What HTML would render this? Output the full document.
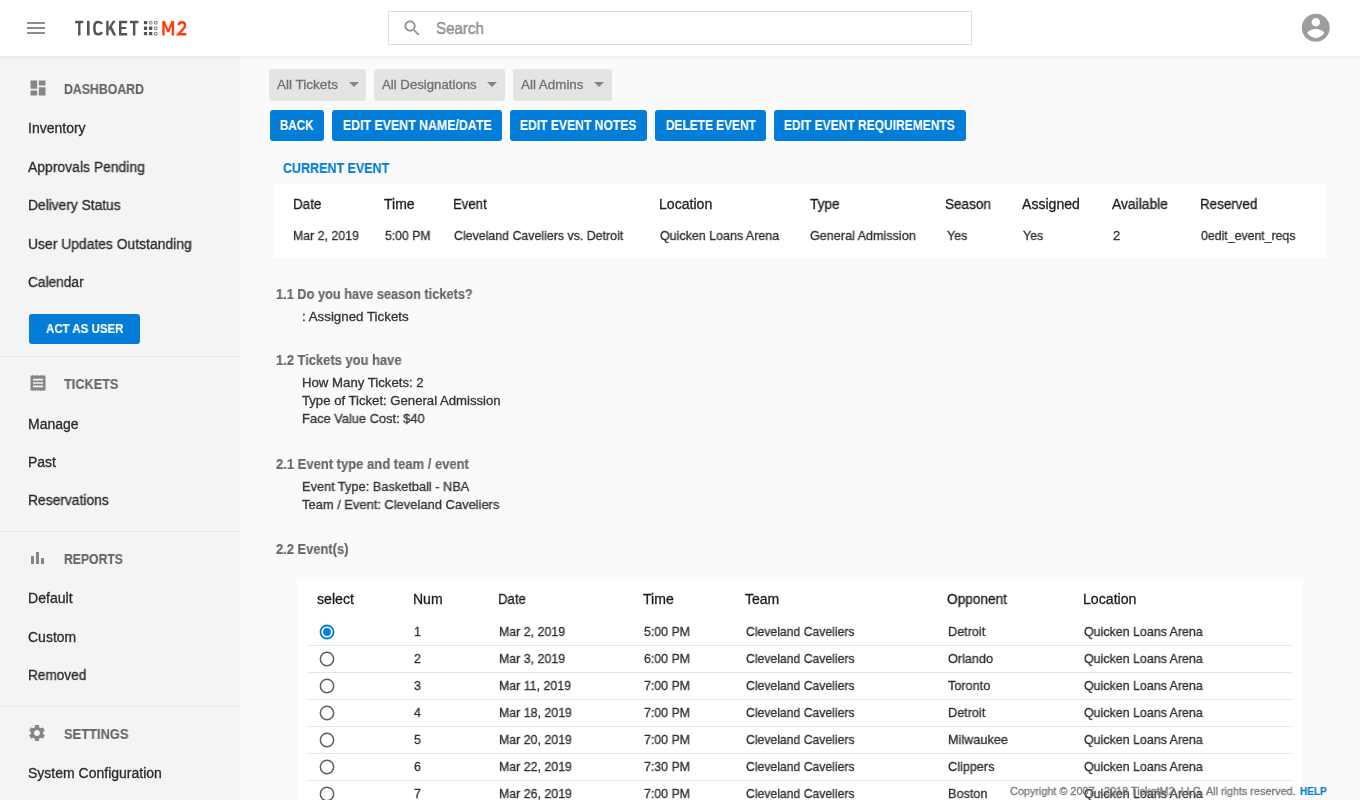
<!DOCTYPE html>
<html><head><meta charset="utf-8"><title>TicketM2</title>
<style>
html,body{margin:0;padding:0;width:1360px;height:800px;overflow:hidden;background:#fafafa;}
body{font-family:"Liberation Sans",sans-serif;position:relative;}
.t{position:absolute;will-change:transform;white-space:nowrap;line-height:1;transform-origin:0 0;}
.r{position:absolute;box-sizing:content-box;}
</style></head><body>
<div class="r" style="left:0px;top:0px;width:1360px;height:800px;background:#fafafa;"></div>
<div class="r" style="left:0px;top:56px;width:240px;height:744px;background:#f4f4f4;"></div>
<div class="r" style="left:0px;top:0px;width:1360px;height:56px;background:#ffffff;box-shadow:0 1px 5px rgba(0,0,0,0.08);z-index:2;"></div>
<div class="r" style="left:27px;top:22px;width:18px;height:2px;background:#8d8b8c;z-index:3"></div>
<div class="r" style="left:27px;top:27px;width:18px;height:2px;background:#8d8b8c;z-index:3"></div>
<div class="r" style="left:27px;top:32px;width:18px;height:2px;background:#8d8b8c;z-index:3"></div>
<svg class="r" style="left:0;top:0;z-index:3" width="200" height="56" viewBox="0 0 200 56">
<g fill="#55544f">
<path d="M75.2 20.8H83.3V23.2H80.5V35.4H78.1V23.2H75.2Z"/>
<path d="M87 20.8H89.6V35.4H87Z"/>
<path d="M106.2 20.8H108.6V35.4H106.2Z"/>
<path d="M108.6 27.4L112.9 20.8H115.8L108.6 31.2Z"/>
<path d="M109.9 28.7L111.7 26.2L116.2 35.4H113.3Z"/>
<path d="M119 20.8H127.2V23.2H121.5V26.9H126.2V29H121.5V33H127.2V35.4H119Z"/>
<path d="M130 20.8H138.4V23.2H135.4V35.4H132.9V23.2H130Z"/>
</g>
<path fill="none" stroke="#55544f" stroke-width="2.5" d="M102.1 24C101.3 22.5 100.2 21.95 98.3 21.95C95.9 21.95 94.45 23.4 94.45 26.2V29.9C94.45 32.7 95.9 34.15 98.3 34.15C100.2 34.15 101.3 33.6 102.1 32.1"/>
<g fill="#55544f">
<rect x="143.9" y="21" width="3.3" height="3.3" rx="0.3"/>
<rect x="143.9" y="26.6" width="3.3" height="3.3" rx="0.3"/>
<rect x="143.9" y="32" width="3.3" height="3.3" rx="0.3"/>
<rect x="149" y="26.6" width="3.3" height="3.3" rx="0.3"/>
<rect x="149" y="32" width="3.3" height="3.3" rx="0.3"/>
</g>
<g fill="none" stroke="#6f6d68" stroke-width="0.9">
<rect x="149.4" y="21.4" width="2.6" height="2.6" rx="0.25"/>
<rect x="154.5" y="21.4" width="2.6" height="2.6" rx="0.25"/>
<rect x="154.5" y="27" width="2.6" height="2.6" rx="0.25"/>
<rect x="154.5" y="32.4" width="2.6" height="2.6" rx="0.25"/>
</g>
<path fill="#ff3b0a" d="M162.3 35.5V20.9H164.9L168.2 29.2L171.5 20.9H174.1V35.5H171.7V25.8L169.3 32.2H167.1L164.7 25.8V35.5Z"/>
<path fill="none" stroke="#ff3b0a" stroke-width="2.4" d="M178.6 25.2C178.8 23.2 180.1 22.2 182 22.2C184 22.2 185 23.6 185 25.2C185 26.7 184.3 27.8 183 29.2L178.3 34.3H186.3"/>
</svg>
<div class="r" style="left:388px;top:11px;width:582px;height:32px;border:1px solid #dedede;background:#fff;z-index:3"></div>
<svg class="r" style="left:402.4px;top:17.6px;z-index:4" width="20.4" height="20.4" viewBox="0 0 24 24"><path fill="#8f8f8f" d="M15.5 14h-.79l-.28-.27C15.41 12.59 16 11.11 16 9.5 16 5.91 13.09 3 9.5 3S3 5.91 3 9.5 5.91 16 9.5 16c1.61 0 3.09-.59 4.23-1.570l.27.28v.79l5 4.99L20.49 19l-4.99-5zm-6 0C7.01 14 5 11.990 5 9.5S7.01 5 9.5 5 14 7.01 14 9.5 11.99 14 9.5 14z"/></svg>
<div class="t" style="left:436.25px;top:21.00px;font-size:16px;color:#8f8f8f;-webkit-text-stroke:0.3px currentColor;transform:scaleX(0.9450);z-index:4;-webkit-text-stroke:0.45px currentColor;">Search</div>
<svg class="r" style="left:1298.8px;top:11.2px;z-index:4" width="33.6" height="33.6" viewBox="0 0 24 24"><path fill="#9e9d9e" d="M12 2C6.48 2 2 6.48 2 12s4.48 10 10 10 10-4.48 10-10S17.52 2 12 2zm0 3c1.66 0 3 1.34 3 3s-1.34 3-3 3-3-1.34-3-3 1.34-3 3-3zm0 14.2c-2.5 0-4.71-1.28-6-3.22.03-1.99 4-3.08 6-3.08 1.99 0 5.970 1.09 6 3.08-1.29 1.94-3.5 3.22-6 3.220z"/></svg>
<div class="t" style="left:64.15px;top:81.90px;font-size:14px;color:#666666;font-weight:bold;-webkit-text-stroke:0.15px currentColor;transform:scaleX(0.8780);">DASHBOARD</div>
<div class="t" style="left:63.75px;top:376.80px;font-size:14px;color:#666666;font-weight:bold;-webkit-text-stroke:0.15px currentColor;transform:scaleX(0.9083);">TICKETS</div>
<div class="t" style="left:64.15px;top:551.90px;font-size:14px;color:#666666;font-weight:bold;-webkit-text-stroke:0.15px currentColor;transform:scaleX(0.8703);">REPORTS</div>
<div class="t" style="left:63.75px;top:726.80px;font-size:14px;color:#666666;font-weight:bold;-webkit-text-stroke:0.15px currentColor;transform:scaleX(0.9212);">SETTINGS</div>
<div class="t" style="left:28.25px;top:121.00px;font-size:14px;color:#2a2a2a;-webkit-text-stroke:0.3px currentColor;transform:scaleX(0.9916);">Inventory</div>
<div class="t" style="left:28.25px;top:159.60px;font-size:14px;color:#2a2a2a;-webkit-text-stroke:0.3px currentColor;transform:scaleX(0.9946);">Approvals Pending</div>
<div class="t" style="left:28.25px;top:198.00px;font-size:14px;color:#2a2a2a;-webkit-text-stroke:0.3px currentColor;transform:scaleX(0.9835);">Delivery Status</div>
<div class="t" style="left:28.25px;top:237.00px;font-size:14px;color:#2a2a2a;-webkit-text-stroke:0.3px currentColor;transform:scaleX(0.9917);">User Updates Outstanding</div>
<div class="t" style="left:28.25px;top:275.00px;font-size:14px;color:#2a2a2a;-webkit-text-stroke:0.3px currentColor;transform:scaleX(0.9787);">Calendar</div>
<div class="t" style="left:28.25px;top:416.80px;font-size:14px;color:#2a2a2a;-webkit-text-stroke:0.3px currentColor;">Manage</div>
<div class="t" style="left:28.25px;top:455.00px;font-size:14px;color:#2a2a2a;-webkit-text-stroke:0.3px currentColor;">Past</div>
<div class="t" style="left:28.25px;top:493.30px;font-size:14px;color:#2a2a2a;-webkit-text-stroke:0.3px currentColor;transform:scaleX(0.9877);">Reservations</div>
<div class="t" style="left:28.25px;top:591.00px;font-size:14px;color:#2a2a2a;-webkit-text-stroke:0.3px currentColor;transform:scaleX(1.0056);">Default</div>
<div class="t" style="left:28.25px;top:629.80px;font-size:14px;color:#2a2a2a;-webkit-text-stroke:0.3px currentColor;transform:scaleX(0.9973);">Custom</div>
<div class="t" style="left:28.25px;top:668.00px;font-size:14px;color:#2a2a2a;-webkit-text-stroke:0.3px currentColor;transform:scaleX(0.9730);">Removed</div>
<div class="t" style="left:28.25px;top:766.00px;font-size:14px;color:#2a2a2a;-webkit-text-stroke:0.3px currentColor;">System Configuration</div>
<svg class="r" style="left:27.5px;top:77.9px" width="20" height="20" viewBox="0 0 24 24"><path fill="#868686" d="M3 13h8V3H3v10zm0 8h8v-6H3v6zm10 0h8V11h-8v10zm0-18v6h8V3h-8z"/></svg>
<svg class="r" style="left:27.5px;top:373.3px" width="20" height="20" viewBox="0 0 24 24"><path fill="#868686" d="M18 17H6v-2h12v2zm0-4H6v-2h12v2zm0-4H6V7h12v2zM3 22l1.5-1.5L6 22l1.5-1.5L9 22l1.5-1.5L12 22l1.5-1.5L15 22l1.5-1.5L18 22l1.5-1.5L21 22V2l-1.5 1.5L18 2l-1.5 1.5L15 2l-1.5 1.5L12 2l-1.5 1.5L9 2 7.5 3.5 6 2 4.5 3.5 3 2v20z"/></svg>
<div class="r" style="left:31.4px;top:555.6px;width:2.8000000000000043px;height:8.600000000000023px;background:#868686;"></div>
<div class="r" style="left:36px;top:551.8px;width:2.799999999999997px;height:12.400000000000091px;background:#868686;"></div>
<div class="r" style="left:41px;top:558.2px;width:2.6000000000000014px;height:6.0px;background:#868686;"></div>
<svg class="r" style="left:27px;top:723px" width="20" height="20" viewBox="0 0 24 24"><path fill="#868686" d="M19.14 12.94c.04-.3.06-.61.06-.94 0-.32-.02-.64-.07-.94l2.03-1.58c.18-.14.23-.41.12-.61l-1.92-3.32c-.12-.22-.37-.29-.59-.22l-2.39.96c-.5-.38-1.03-.7-1.62-.94l-.36-2.54c-.04-.24-.24-.41-.48-.41h-3.84c-.24 0-.43.17-.47.41l-.36 2.54c-.59.24-1.13.57-1.62.94l-2.39-.96c-.22-.08-.47 0-.59.22L2.74 8.87c-.12.21-.08.47.12.61l2.030 1.58c-.05.3-.09.63-.09.94s.02.64.07.94l-2.03 1.58c-.18.14-.23.41-.12.61l1.92 3.32c.12.22.37.29.59.22l2.39-.96c.5.38 1.03.7 1.62.94l.36 2.54c.05.24.24.41.48.41h3.84c.24 0 .44-.17.47-.41l.36-2.54c.59-.24 1.13-.56 1.62-.94l2.39.96c.22.08.47 0 .59-.22l1.92-3.32c.12-.22.07-.47-.12-.61l-2.01-1.58zM12 15.6c-1.98 0-3.6-1.62-3.6-3.6s1.62-3.6 3.6-3.6 3.6 1.62 3.6 3.6-1.62 3.6-3.6 3.6z"/></svg>
<div class="r" style="left:29px;top:314px;width:111px;height:30px;background:#027ed8;border-radius:3px;"></div>
<div class="t" style="left:45.65px;top:322.00px;font-size:13px;color:#ffffff;font-weight:bold;-webkit-text-stroke:0.15px currentColor;transform:scaleX(0.8832);">ACT AS USER</div>
<div class="r" style="left:0px;top:356px;width:240px;height:1px;background:#e9e9e9;"></div>
<div class="r" style="left:0px;top:531px;width:240px;height:1px;background:#e9e9e9;"></div>
<div class="r" style="left:0px;top:706px;width:240px;height:1px;background:#e9e9e9;"></div>
<div class="r" style="left:269px;top:69px;width:97px;height:32px;background:#e4e4e4;border-radius:3px;"></div>
<div class="t" style="left:276.75px;top:77.70px;font-size:13px;color:#707070;-webkit-text-stroke:0.3px currentColor;transform:scaleX(1.0408);">All Tickets</div>
<div class="r" style="left:348.59999999999997px;top:82px;width:0;height:0;border-left:5px solid transparent;border-right:5px solid transparent;border-top:5px solid #858585"></div>
<div class="r" style="left:374px;top:69px;width:131px;height:32px;background:#e4e4e4;border-radius:3px;"></div>
<div class="t" style="left:381.65px;top:77.70px;font-size:13px;color:#707070;-webkit-text-stroke:0.3px currentColor;transform:scaleX(1.0160);">All Designations</div>
<div class="r" style="left:487.3px;top:82px;width:0;height:0;border-left:5px solid transparent;border-right:5px solid transparent;border-top:5px solid #858585"></div>
<div class="r" style="left:513px;top:69px;width:99px;height:32px;background:#e4e4e4;border-radius:3px;"></div>
<div class="t" style="left:520.75px;top:77.70px;font-size:13px;color:#707070;-webkit-text-stroke:0.3px currentColor;transform:scaleX(1.0297);">All Admins</div>
<div class="r" style="left:594.3000000000001px;top:82px;width:0;height:0;border-left:5px solid transparent;border-right:5px solid transparent;border-top:5px solid #858585"></div>
<div class="r" style="left:270px;top:110px;width:54px;height:31px;background:#027ed8;border-radius:3px;"></div>
<div class="t" style="left:280.45px;top:118.00px;font-size:14px;color:#ffffff;font-weight:bold;-webkit-text-stroke:0.15px currentColor;transform:scaleX(0.8307);">BACK</div>
<div class="r" style="left:332px;top:110px;width:170px;height:31px;background:#027ed8;border-radius:3px;"></div>
<div class="t" style="left:342.65px;top:118.00px;font-size:14px;color:#ffffff;font-weight:bold;-webkit-text-stroke:0.15px currentColor;transform:scaleX(0.8823);">EDIT EVENT NAME/DATE</div>
<div class="r" style="left:510px;top:110px;width:137px;height:31px;background:#027ed8;border-radius:3px;"></div>
<div class="t" style="left:520.25px;top:118.00px;font-size:14px;color:#ffffff;font-weight:bold;-webkit-text-stroke:0.15px currentColor;transform:scaleX(0.8657);">EDIT EVENT NOTES</div>
<div class="r" style="left:655px;top:110px;width:111px;height:31px;background:#027ed8;border-radius:3px;"></div>
<div class="t" style="left:665.65px;top:118.00px;font-size:14px;color:#ffffff;font-weight:bold;-webkit-text-stroke:0.15px currentColor;transform:scaleX(0.8497);">DELETE EVENT</div>
<div class="r" style="left:774px;top:110px;width:192px;height:31px;background:#027ed8;border-radius:3px;"></div>
<div class="t" style="left:784.25px;top:118.00px;font-size:14px;color:#ffffff;font-weight:bold;-webkit-text-stroke:0.15px currentColor;transform:scaleX(0.8577);">EDIT EVENT REQUIREMENTS</div>
<div class="t" style="left:283.45px;top:161.10px;font-size:14px;color:#027ed8;font-weight:bold;-webkit-text-stroke:0.15px currentColor;transform:scaleX(0.8932);">CURRENT EVENT</div>
<div class="r" style="left:273px;top:184px;width:1054px;height:74px;background:#ffffff;"></div>
<div class="t" style="left:292.55px;top:196.80px;font-size:14px;color:#1c1c1c;-webkit-text-stroke:0.3px currentColor;transform:scaleX(0.9605);">Date</div>
<div class="t" style="left:383.75px;top:196.80px;font-size:14px;color:#1c1c1c;-webkit-text-stroke:0.3px currentColor;">Time</div>
<div class="t" style="left:453.45px;top:196.80px;font-size:14px;color:#1c1c1c;-webkit-text-stroke:0.3px currentColor;transform:scaleX(0.9414);">Event</div>
<div class="t" style="left:659.35px;top:196.80px;font-size:14px;color:#1c1c1c;-webkit-text-stroke:0.3px currentColor;transform:scaleX(1.0069);">Location</div>
<div class="t" style="left:809.65px;top:196.80px;font-size:14px;color:#1c1c1c;-webkit-text-stroke:0.3px currentColor;transform:scaleX(0.9752);">Type</div>
<div class="t" style="left:945.25px;top:196.80px;font-size:14px;color:#1c1c1c;-webkit-text-stroke:0.3px currentColor;transform:scaleX(0.9666);">Season</div>
<div class="t" style="left:1021.95px;top:196.80px;font-size:14px;color:#1c1c1c;-webkit-text-stroke:0.3px currentColor;transform:scaleX(1.0053);">Assigned</div>
<div class="t" style="left:1112.15px;top:196.80px;font-size:14px;color:#1c1c1c;-webkit-text-stroke:0.3px currentColor;transform:scaleX(0.9883);">Available</div>
<div class="t" style="left:1200.15px;top:196.80px;font-size:14px;color:#1c1c1c;-webkit-text-stroke:0.3px currentColor;transform:scaleX(0.9563);">Reserved</div>
<div class="t" style="left:293.35px;top:229.00px;font-size:13px;color:#2e2e2e;-webkit-text-stroke:0.3px currentColor;transform:scaleX(0.9486);">Mar 2, 2019</div>
<div class="t" style="left:384.95px;top:229.00px;font-size:13px;color:#2e2e2e;-webkit-text-stroke:0.3px currentColor;transform:scaleX(0.9398);">5:00 PM</div>
<div class="t" style="left:454.25px;top:229.00px;font-size:13px;color:#2e2e2e;-webkit-text-stroke:0.3px currentColor;transform:scaleX(0.9520);">Cleveland Caveliers vs. Detroit</div>
<div class="t" style="left:660.15px;top:229.00px;font-size:13px;color:#2e2e2e;-webkit-text-stroke:0.3px currentColor;transform:scaleX(0.9588);">Quicken Loans Arena</div>
<div class="t" style="left:810.25px;top:229.00px;font-size:13px;color:#2e2e2e;-webkit-text-stroke:0.3px currentColor;transform:scaleX(0.9688);">General Admission</div>
<div class="t" style="left:946.55px;top:229.00px;font-size:13px;color:#2e2e2e;-webkit-text-stroke:0.3px currentColor;transform:scaleX(0.9574);">Yes</div>
<div class="t" style="left:1023.35px;top:229.00px;font-size:13px;color:#2e2e2e;-webkit-text-stroke:0.3px currentColor;transform:scaleX(0.9527);">Yes</div>
<div class="t" style="left:1113.25px;top:229.00px;font-size:13px;color:#2e2e2e;-webkit-text-stroke:0.3px currentColor;transform:scaleX(0.9823);">2</div>
<div class="t" style="left:1201.45px;top:229.00px;font-size:13px;color:#2e2e2e;-webkit-text-stroke:0.3px currentColor;transform:scaleX(0.9465);">0edit_event_reqs</div>
<div class="t" style="left:275.55px;top:286.75px;font-size:14px;color:#666666;font-weight:bold;-webkit-text-stroke:0.15px currentColor;transform:scaleX(0.9126);">1.1 Do you have season tickets?</div>
<div class="t" style="left:301.75px;top:309.90px;font-size:13px;color:#333333;-webkit-text-stroke:0.3px currentColor;transform:scaleX(1.0254);">: Assigned Tickets</div>
<div class="t" style="left:275.55px;top:352.90px;font-size:14px;color:#666666;font-weight:bold;-webkit-text-stroke:0.15px currentColor;transform:scaleX(0.9233);">1.2 Tickets you have</div>
<div class="t" style="left:301.75px;top:375.90px;font-size:13px;color:#333333;-webkit-text-stroke:0.3px currentColor;transform:scaleX(1.0148);">How Many Tickets: 2</div>
<div class="t" style="left:301.75px;top:394.30px;font-size:13px;color:#333333;-webkit-text-stroke:0.3px currentColor;transform:scaleX(1.0105);">Type of Ticket: General Admission</div>
<div class="t" style="left:301.75px;top:412.40px;font-size:13px;color:#333333;-webkit-text-stroke:0.3px currentColor;transform:scaleX(0.9890);">Face Value Cost: $40</div>
<div class="t" style="left:275.55px;top:456.75px;font-size:14px;color:#666666;font-weight:bold;-webkit-text-stroke:0.15px currentColor;transform:scaleX(0.9285);">2.1 Event type and team / event</div>
<div class="t" style="left:301.75px;top:479.90px;font-size:13px;color:#333333;-webkit-text-stroke:0.3px currentColor;transform:scaleX(0.9825);">Event Type: Basketball - NBA</div>
<div class="t" style="left:301.75px;top:497.70px;font-size:13px;color:#333333;-webkit-text-stroke:0.3px currentColor;transform:scaleX(0.9929);">Team / Event: Cleveland Caveliers</div>
<div class="t" style="left:275.55px;top:541.70px;font-size:14px;color:#666666;font-weight:bold;-webkit-text-stroke:0.15px currentColor;transform:scaleX(0.9213);">2.2 Event(s)</div>
<div class="r" style="left:297px;top:579px;width:1006px;height:221px;background:#ffffff;"></div>
<div class="t" style="left:316.55px;top:591.75px;font-size:14px;color:#1c1c1c;-webkit-text-stroke:0.3px currentColor;transform:scaleX(1.0118);">select</div>
<div class="t" style="left:412.75px;top:591.75px;font-size:14px;color:#1c1c1c;-webkit-text-stroke:0.3px currentColor;">Num</div>
<div class="t" style="left:497.85px;top:591.75px;font-size:14px;color:#1c1c1c;-webkit-text-stroke:0.3px currentColor;transform:scaleX(0.9402);">Date</div>
<div class="t" style="left:642.85px;top:591.75px;font-size:14px;color:#1c1c1c;-webkit-text-stroke:0.3px currentColor;transform:scaleX(1.0036);">Time</div>
<div class="t" style="left:744.95px;top:591.75px;font-size:14px;color:#1c1c1c;-webkit-text-stroke:0.3px currentColor;">Team</div>
<div class="t" style="left:946.85px;top:591.75px;font-size:14px;color:#1c1c1c;-webkit-text-stroke:0.3px currentColor;transform:scaleX(0.9756);">Opponent</div>
<div class="t" style="left:1082.95px;top:591.75px;font-size:14px;color:#1c1c1c;-webkit-text-stroke:0.3px currentColor;transform:scaleX(1.0088);">Location</div>
<div class="t" style="left:498.75px;top:624.60px;font-size:13px;color:#2e2e2e;-webkit-text-stroke:0.3px currentColor;transform:scaleX(0.9514);">Mar 2, 2019</div>
<div class="t" style="left:643.75px;top:624.60px;font-size:13px;color:#2e2e2e;-webkit-text-stroke:0.3px currentColor;transform:scaleX(0.9502);">5:00 PM</div>
<div class="t" style="left:745.85px;top:624.60px;font-size:13px;color:#2e2e2e;-webkit-text-stroke:0.3px currentColor;transform:scaleX(0.9394);">Cleveland Caveliers</div>
<div class="t" style="left:947.95px;top:624.60px;font-size:13px;color:#2e2e2e;-webkit-text-stroke:0.3px currentColor;transform:scaleX(0.9743);">Detroit</div>
<div class="t" style="left:1083.65px;top:624.60px;font-size:13px;color:#2e2e2e;-webkit-text-stroke:0.3px currentColor;transform:scaleX(0.9556);">Quicken Loans Arena</div>
<div class="t" style="left:414.05px;top:624.60px;font-size:13px;color:#2e2e2e;-webkit-text-stroke:0.3px currentColor;transform:scaleX(0.9514);">1</div>
<svg class="r" style="left:318px;top:623px" width="18" height="18" viewBox="0 0 18 18"><circle cx="9" cy="9" r="6.5" fill="none" stroke="#027ed8" stroke-width="1.8"/><circle cx="9" cy="9" r="3.9" fill="#027ed8"/></svg>
<div class="r" style="left:307px;top:645px;width:986px;height:1px;background:#e6e6e6;"></div>
<div class="t" style="left:414.05px;top:651.60px;font-size:13px;color:#2e2e2e;-webkit-text-stroke:0.3px currentColor;transform:scaleX(0.9514);">2</div>
<div class="t" style="left:498.75px;top:651.60px;font-size:13px;color:#2e2e2e;-webkit-text-stroke:0.3px currentColor;transform:scaleX(0.9514);">Mar 3, 2019</div>
<div class="t" style="left:643.75px;top:651.60px;font-size:13px;color:#2e2e2e;-webkit-text-stroke:0.3px currentColor;transform:scaleX(0.9502);">6:00 PM</div>
<div class="t" style="left:745.85px;top:651.60px;font-size:13px;color:#2e2e2e;-webkit-text-stroke:0.3px currentColor;transform:scaleX(0.9394);">Cleveland Caveliers</div>
<div class="t" style="left:947.95px;top:651.60px;font-size:13px;color:#2e2e2e;-webkit-text-stroke:0.3px currentColor;transform:scaleX(0.9743);">Orlando</div>
<div class="t" style="left:1083.65px;top:651.60px;font-size:13px;color:#2e2e2e;-webkit-text-stroke:0.3px currentColor;transform:scaleX(0.9556);">Quicken Loans Arena</div>
<svg class="r" style="left:318px;top:650px" width="18" height="18" viewBox="0 0 18 18"><circle cx="9" cy="9" r="6.65" fill="none" stroke="#5f5f5f" stroke-width="1.5"/></svg>
<div class="r" style="left:307px;top:672px;width:986px;height:1px;background:#e6e6e6;"></div>
<div class="t" style="left:414.05px;top:678.60px;font-size:13px;color:#2e2e2e;-webkit-text-stroke:0.3px currentColor;transform:scaleX(0.9514);">3</div>
<div class="t" style="left:498.75px;top:678.60px;font-size:13px;color:#2e2e2e;-webkit-text-stroke:0.3px currentColor;transform:scaleX(0.9514);">Mar 11, 2019</div>
<div class="t" style="left:643.75px;top:678.60px;font-size:13px;color:#2e2e2e;-webkit-text-stroke:0.3px currentColor;transform:scaleX(0.9502);">7:00 PM</div>
<div class="t" style="left:745.85px;top:678.60px;font-size:13px;color:#2e2e2e;-webkit-text-stroke:0.3px currentColor;transform:scaleX(0.9394);">Cleveland Caveliers</div>
<div class="t" style="left:947.95px;top:678.60px;font-size:13px;color:#2e2e2e;-webkit-text-stroke:0.3px currentColor;transform:scaleX(0.9743);">Toronto</div>
<div class="t" style="left:1083.65px;top:678.60px;font-size:13px;color:#2e2e2e;-webkit-text-stroke:0.3px currentColor;transform:scaleX(0.9556);">Quicken Loans Arena</div>
<svg class="r" style="left:318px;top:677px" width="18" height="18" viewBox="0 0 18 18"><circle cx="9" cy="9" r="6.65" fill="none" stroke="#5f5f5f" stroke-width="1.5"/></svg>
<div class="r" style="left:307px;top:699px;width:986px;height:1px;background:#e6e6e6;"></div>
<div class="t" style="left:414.05px;top:705.60px;font-size:13px;color:#2e2e2e;-webkit-text-stroke:0.3px currentColor;transform:scaleX(0.9514);">4</div>
<div class="t" style="left:498.75px;top:705.60px;font-size:13px;color:#2e2e2e;-webkit-text-stroke:0.3px currentColor;transform:scaleX(0.9514);">Mar 18, 2019</div>
<div class="t" style="left:643.75px;top:705.60px;font-size:13px;color:#2e2e2e;-webkit-text-stroke:0.3px currentColor;transform:scaleX(0.9502);">7:00 PM</div>
<div class="t" style="left:745.85px;top:705.60px;font-size:13px;color:#2e2e2e;-webkit-text-stroke:0.3px currentColor;transform:scaleX(0.9394);">Cleveland Caveliers</div>
<div class="t" style="left:947.95px;top:705.60px;font-size:13px;color:#2e2e2e;-webkit-text-stroke:0.3px currentColor;transform:scaleX(0.9743);">Detroit</div>
<div class="t" style="left:1083.65px;top:705.60px;font-size:13px;color:#2e2e2e;-webkit-text-stroke:0.3px currentColor;transform:scaleX(0.9556);">Quicken Loans Arena</div>
<svg class="r" style="left:318px;top:704px" width="18" height="18" viewBox="0 0 18 18"><circle cx="9" cy="9" r="6.65" fill="none" stroke="#5f5f5f" stroke-width="1.5"/></svg>
<div class="r" style="left:307px;top:726px;width:986px;height:1px;background:#e6e6e6;"></div>
<div class="t" style="left:414.05px;top:732.60px;font-size:13px;color:#2e2e2e;-webkit-text-stroke:0.3px currentColor;transform:scaleX(0.9514);">5</div>
<div class="t" style="left:498.75px;top:732.60px;font-size:13px;color:#2e2e2e;-webkit-text-stroke:0.3px currentColor;transform:scaleX(0.9514);">Mar 20, 2019</div>
<div class="t" style="left:643.75px;top:732.60px;font-size:13px;color:#2e2e2e;-webkit-text-stroke:0.3px currentColor;transform:scaleX(0.9502);">7:00 PM</div>
<div class="t" style="left:745.85px;top:732.60px;font-size:13px;color:#2e2e2e;-webkit-text-stroke:0.3px currentColor;transform:scaleX(0.9394);">Cleveland Caveliers</div>
<div class="t" style="left:947.95px;top:732.60px;font-size:13px;color:#2e2e2e;-webkit-text-stroke:0.3px currentColor;transform:scaleX(0.9743);">Milwaukee</div>
<div class="t" style="left:1083.65px;top:732.60px;font-size:13px;color:#2e2e2e;-webkit-text-stroke:0.3px currentColor;transform:scaleX(0.9556);">Quicken Loans Arena</div>
<svg class="r" style="left:318px;top:731px" width="18" height="18" viewBox="0 0 18 18"><circle cx="9" cy="9" r="6.65" fill="none" stroke="#5f5f5f" stroke-width="1.5"/></svg>
<div class="r" style="left:307px;top:753px;width:986px;height:1px;background:#e6e6e6;"></div>
<div class="t" style="left:414.05px;top:759.60px;font-size:13px;color:#2e2e2e;-webkit-text-stroke:0.3px currentColor;transform:scaleX(0.9514);">6</div>
<div class="t" style="left:498.75px;top:759.60px;font-size:13px;color:#2e2e2e;-webkit-text-stroke:0.3px currentColor;transform:scaleX(0.9514);">Mar 22, 2019</div>
<div class="t" style="left:643.75px;top:759.60px;font-size:13px;color:#2e2e2e;-webkit-text-stroke:0.3px currentColor;transform:scaleX(0.9502);">7:30 PM</div>
<div class="t" style="left:745.85px;top:759.60px;font-size:13px;color:#2e2e2e;-webkit-text-stroke:0.3px currentColor;transform:scaleX(0.9394);">Cleveland Caveliers</div>
<div class="t" style="left:947.95px;top:759.60px;font-size:13px;color:#2e2e2e;-webkit-text-stroke:0.3px currentColor;transform:scaleX(0.9743);">Clippers</div>
<div class="t" style="left:1083.65px;top:759.60px;font-size:13px;color:#2e2e2e;-webkit-text-stroke:0.3px currentColor;transform:scaleX(0.9556);">Quicken Loans Arena</div>
<svg class="r" style="left:318px;top:758px" width="18" height="18" viewBox="0 0 18 18"><circle cx="9" cy="9" r="6.65" fill="none" stroke="#5f5f5f" stroke-width="1.5"/></svg>
<div class="r" style="left:307px;top:780px;width:986px;height:1px;background:#e6e6e6;"></div>
<div class="t" style="left:414.05px;top:786.60px;font-size:13px;color:#2e2e2e;-webkit-text-stroke:0.3px currentColor;transform:scaleX(0.9514);">7</div>
<div class="t" style="left:498.75px;top:786.60px;font-size:13px;color:#2e2e2e;-webkit-text-stroke:0.3px currentColor;transform:scaleX(0.9514);">Mar 26, 2019</div>
<div class="t" style="left:643.75px;top:786.60px;font-size:13px;color:#2e2e2e;-webkit-text-stroke:0.3px currentColor;transform:scaleX(0.9502);">7:00 PM</div>
<div class="t" style="left:745.85px;top:786.60px;font-size:13px;color:#2e2e2e;-webkit-text-stroke:0.3px currentColor;transform:scaleX(0.9394);">Cleveland Caveliers</div>
<div class="t" style="left:947.95px;top:786.60px;font-size:13px;color:#2e2e2e;-webkit-text-stroke:0.3px currentColor;transform:scaleX(0.9743);">Boston</div>
<div class="t" style="left:1083.65px;top:786.60px;font-size:13px;color:#2e2e2e;-webkit-text-stroke:0.3px currentColor;transform:scaleX(0.9556);">Quicken Loans Arena</div>
<svg class="r" style="left:318px;top:785px" width="18" height="18" viewBox="0 0 18 18"><circle cx="9" cy="9" r="6.65" fill="none" stroke="#5f5f5f" stroke-width="1.5"/></svg>
<div class="t" style="left:1010.25px;top:786.10px;font-size:11px;color:#777777;-webkit-text-stroke:0.3px currentColor;transform:scaleX(0.9846);z-index:5;">Copyright © 2007 - 2018 TicketM2, LLC. All rights reserved.</div>
<div class="t" style="left:1300.05px;top:786.10px;font-size:11px;color:#027ed8;font-weight:bold;-webkit-text-stroke:0.15px currentColor;transform:scaleX(0.9135);z-index:5;">HELP</div>
</body></html>
